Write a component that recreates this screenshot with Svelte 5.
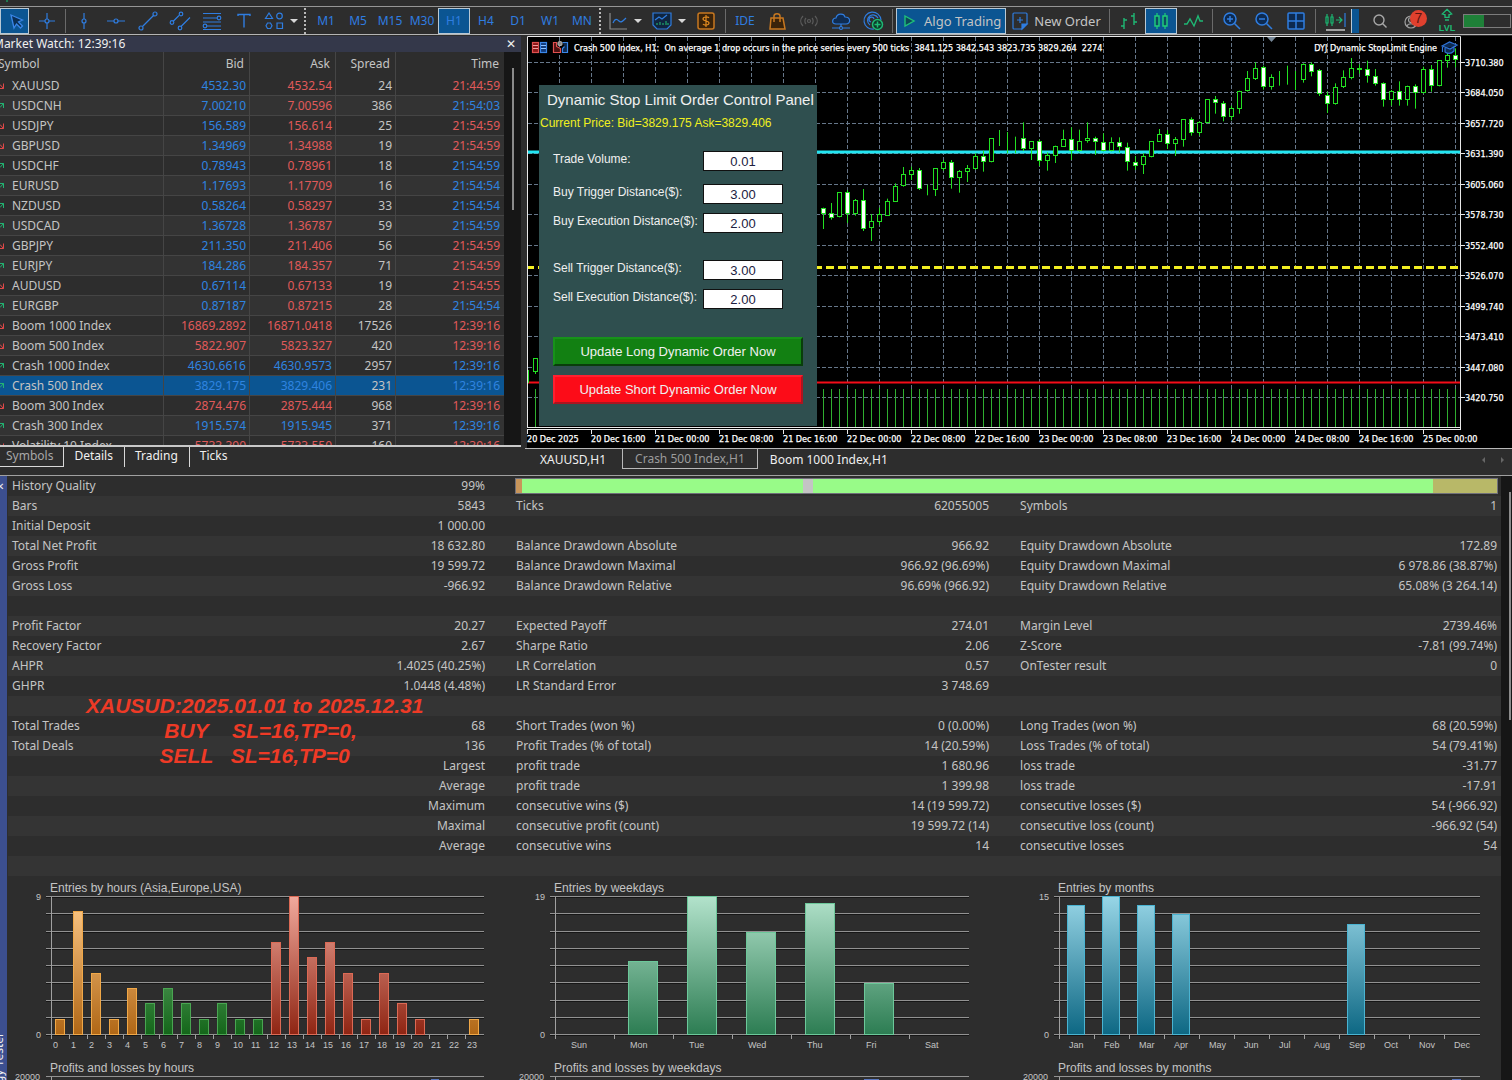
<script>
  const frames = ['M1', 'M5', 'M15', 'M30', 'H1', 'H4', 'D1', 'W1', 'MN'];

  // symbol, bid, ask, spread, time, arrow direction, bid colour, ask colour, time colour
  const quotes = [
    ['XAUUSD', '4532.30', '4532.54', '24', '21:44:59', 'd', 'b', 'r', 'r'],
    ['USDCNH', '7.00210', '7.00596', '386', '21:54:03', 'u', 'b', 'r', 'b'],
    ['USDJPY', '156.589', '156.614', '25', '21:54:59', 'd', 'b', 'r', 'r'],
    ['GBPUSD', '1.34969', '1.34988', '19', '21:54:59', 'd', 'b', 'r', 'r'],
    ['USDCHF', '0.78943', '0.78961', '18', '21:54:59', 'u', 'b', 'r', 'b'],
    ['EURUSD', '1.17693', '1.17709', '16', '21:54:54', 'u', 'b', 'r', 'b'],
    ['NZDUSD', '0.58264', '0.58297', '33', '21:54:54', 'u', 'b', 'r', 'b'],
    ['USDCAD', '1.36728', '1.36787', '59', '21:54:59', 'u', 'b', 'r', 'b'],
    ['GBPJPY', '211.350', '211.406', '56', '21:54:59', 'd', 'b', 'r', 'r'],
    ['EURJPY', '184.286', '184.357', '71', '21:54:59', 'u', 'b', 'r', 'r'],
    ['AUDUSD', '0.67114', '0.67133', '19', '21:54:55', 'd', 'b', 'r', 'r'],
    ['EURGBP', '0.87187', '0.87215', '28', '21:54:54', 'u', 'b', 'r', 'b'],
    ['Boom 1000 Index', '16869.2892', '16871.0418', '17526', '12:39:16', 'd', 'r', 'r', 'r'],
    ['Boom 500 Index', '5822.907', '5823.327', '420', '12:39:16', 'd', 'r', 'r', 'r'],
    ['Crash 1000 Index', '4630.6616', '4630.9573', '2957', '12:39:16', 'u', 'b', 'b', 'b'],
    ['Crash 500 Index', '3829.175', '3829.406', '231', '12:39:16', 'u', 'b', 'b', 'b'],
    ['Boom 300 Index', '2874.476', '2875.444', '968', '12:39:16', 'd', 'r', 'r', 'r'],
    ['Crash 300 Index', '1915.574', '1915.945', '371', '12:39:16', 'u', 'b', 'b', 'b'],
    ['Volatility 10 Index', '5733.390', '5733.550', '160', '12:39:16', 'd', 'r', 'r', 'r']
  ];

  // high, body top, body bottom, low (thirds of a pixel from the chart's top), 1 = bearish
  const candles = [
    [503,505,521,567,1],[489,520,533,539,1],[457,457,532,532,0],[450,457,521,549,1],[477,480,521,527,0],
    [447,480,566,573,1],[522,543,565,603,0],[503,521,545,555,0],[476,484,527,527,0],[430,438,485,485,0],
    [381,403,438,440,0],[380,391,404,420,0],[384,391,448,450,1],[434,447,449,466,0],[385,385,450,468,0],
    [360,366,387,392,0],[360,367,415,446,1],[390,394,415,458,0],[375,385,395,426,0],[340,349,387,389,0],
    [332,349,367,395,1],[294,294,367,367,0],[270,292,295,318,0],[276,292,295,340,0],[290,293,296,340,0],
    [247,295,327,333,1],[303,303,327,360,0],[298,303,362,378,1],[337,346,362,392,0],[317,317,347,369,0],
    [269,298,320,320,0],[262,298,332,360,1],[269,303,332,335,0],[247,294,304,308,0],[290,294,307,345,1],
    [280,307,332,334,1],[292,307,332,334,0],[292,307,322,337,1],[308,320,367,392,1],[348,366,377,390,1],
    [340,349,376,402,0],[303,303,350,352,0],[267,283,305,306,0],[270,283,311,327,1],[291,298,311,348,0],
    [237,237,299,320,0],[232,238,279,287,1],[244,246,279,287,0],[178,178,248,250,0],[168,178,190,221,1],
    [183,188,230,244,1],[197,203,230,241,0],[152,152,206,221,0],[93,115,153,155,0],[67,84,116,120,0],
    [77,82,142,149,1],[103,112,142,149,0],[93,112,115,137,0],[77,114,117,134,0],[93,118,119,150,0],
    [70,73,119,128,0],[67,73,95,109,1],[87,91,163,168,1],[155,164,193,219,1],[130,140,193,194,0],
    [91,112,142,144,0],[54,83,115,118,0],[73,83,90,101,1],[62,88,107,128,1],[87,107,131,137,1],
    [127,129,181,200,1],[150,154,181,197,0],[124,154,179,197,1],[137,137,179,197,0],[133,137,158,206,1],
    [80,87,158,160,0],[75,86,139,155,1],[60,60,139,139,0],[33,46,62,83,0],[25,46,60,82,1]
  ].map(([h, t, b, l, f], i) => ({
    x: 823 + 8 * i, h: 40 + h / 3, t: Math.round(40 + t / 3), b: Math.round(40 + b / 3), l: 40 + l / 3, f
  }));

  const prices = ['3710.380', '3684.050', '3657.720', '3631.390', '3605.060', '3578.730', '3552.400', '3526.070', '3499.740', '3473.410', '3447.080', '3420.750'];
  const priceY = (i) => Math.round(62 + 30.45 * i) + 0.5;
  const times = ['20 Dec 2025', '20 Dec 16:00', '21 Dec 00:00', '21 Dec 08:00', '21 Dec 16:00', '22 Dec 00:00', '22 Dec 08:00', '22 Dec 16:00', '23 Dec 00:00', '23 Dec 08:00', '23 Dec 16:00', '24 Dec 00:00', '24 Dec 08:00', '24 Dec 16:00', '25 Dec 00:00'];
  const columns = Array.from({ length: 29 }, (_, i) => 559.5 + 32 * i);

  const fields = [
    ['vol', 'Trade Volume:', '0.01', 'f1'],
    ['bt', 'Buy Trigger Distance($):', '3.00', 'f2'],
    ['be', 'Buy Execution Distance($):', '2.00', 'f3'],
    ['st', 'Sell Trigger Distance($):', '3.00', 'f4'],
    ['se', 'Sell Execution Distance($):', '2.00', 'f3']
  ];

  const stats = [
    ['Bars', '5843', 'Ticks', '62055005', 'Symbols', '1'],
    ['Initial Deposit', '1 000.00', '', '', '', ''],
    ['Total Net Profit', '18 632.80', 'Balance Drawdown Absolute', '966.92', 'Equity Drawdown Absolute', '172.89'],
    ['Gross Profit', '19 599.72', 'Balance Drawdown Maximal', '966.92 (96.69%)', 'Equity Drawdown Maximal', '6 978.86 (38.87%)'],
    ['Gross Loss', '-966.92', 'Balance Drawdown Relative', '96.69% (966.92)', 'Equity Drawdown Relative', '65.08% (3 264.14)'],
    ['', '', '', '', '', ''],
    ['Profit Factor', '20.27', 'Expected Payoff', '274.01', 'Margin Level', '2739.46%'],
    ['Recovery Factor', '2.67', 'Sharpe Ratio', '2.06', 'Z-Score', '-7.81 (99.74%)'],
    ['AHPR', '1.4025 (40.25%)', 'LR Correlation', '0.57', 'OnTester result', '0'],
    ['GHPR', '1.0448 (4.48%)', 'LR Standard Error', '3 748.69', '', ''],
    ['', '', '', '', '', ''],
    ['Total Trades', '68', 'Short Trades (won %)', '0 (0.00%)', 'Long Trades (won %)', '68 (20.59%)'],
    ['Total Deals', '136', 'Profit Trades (% of total)', '14 (20.59%)', 'Loss Trades (% of total)', '54 (79.41%)'],
    ['', 'Largest', 'profit trade', '1 680.96', 'loss trade', '-31.77'],
    ['', 'Average', 'profit trade', '1 399.98', 'loss trade', '-17.91'],
    ['', 'Maximum', 'consecutive wins ($)', '14 (19 599.72)', 'consecutive losses ($)', '54 (-966.92)'],
    ['', 'Maximal', 'consecutive profit (count)', '19 599.72 (14)', 'consecutive loss (count)', '-966.92 (54)'],
    ['', 'Average', 'consecutive wins', '14', 'consecutive losses', '54'],
    ['', '', '', '', '', '']
  ];

  const hourTone = (i) => (i < 5 || i > 20 ? 'orange' : i < 12 ? 'green' : 'red');
  const charts = [
    {
      title: 'Entries by hours (Asia,Europe,USA)', next: 'Profits and losses by hours', max: 9, end: 484, vw: 504,
      step: 18, bx: 55, bw: 10, lx: 53, hint: [431, 8],
      labels: Array.from({ length: 24 }, (_, i) => String(i)),
      values: [1, 8, 4, 1, 3, 2, 3, 2, 1, 2, 1, 1, 6, 9, 5, 6, 4, 1, 4, 2, 1, 0, 0, 1], tone: hourTone
    },
    {
      title: 'Entries by weekdays', next: 'Profits and losses by weekdays', max: 19, end: 465, vw: 504,
      step: 59, bx: 65, bw: 30, lx: 67, hint: [360, 15],
      labels: ['Sun', 'Mon', 'Tue', 'Wed', 'Thu', 'Fri', 'Sat'],
      values: [0, 10, 19, 14, 18, 7, 0], tone: () => 'mint'
    },
    {
      title: 'Entries by months', next: 'Profits and losses by months', max: 15, end: 472, vw: 485,
      step: 35, bx: 59, bw: 18, lx: 61, hint: [444, 9],
      labels: ['Jan', 'Feb', 'Mar', 'Apr', 'May', 'Jun', 'Jul', 'Aug', 'Sep', 'Oct', 'Nov', 'Dec'],
      values: [14, 15, 14, 13, 0, 0, 0, 0, 12, 0, 0, 0], tone: () => 'aqua'
    }
  ];
  const edge = { orange: '#f0a848', green: '#4aa552', red: '#dc6a55', mint: '#6cc89a', aqua: '#4ab4d2' };
  const ramps = [
    ['orange', '#ffcb8a', '#b06716'], ['green', '#86c48c', '#14661a'], ['red', '#f0a99c', '#8f2513'],
    ['mint', '#b2e2cb', '#2d7d53'], ['aqua', '#97d5e6', '#0e6884']
  ];
</script>

{#snippet icon(name)}
  <svg class="ico" viewBox="0 0 24 24" width="24" height="24" aria-hidden="true">
    {#if name === 'cursor'}
      <path d="M8 6l3 13 2.500-4 4 4 2-2-4-4 4-2z" fill="#0a2f55" stroke="#3a86e8" stroke-width="1.300" />
    {:else if name === 'cross'}
      <path d="M12 4v6M12 14v6M4 12h6M14 12h6" /><circle cx="12" cy="12" r="2" />
    {:else if name === 'vline'}
      <path d="M12 4v6M12 14v6" /><circle cx="12" cy="12" r="2" />
    {:else if name === 'hline'}
      <path d="M3 12h7M14 12h7" /><circle cx="12" cy="12" r="2" />
    {:else if name === 'trend'}
      <path d="M6.500 17.500L17.500 6.500" /><circle cx="5" cy="19" r="2" /><circle cx="19" cy="5" r="2" />
    {:else if name === 'channel'}
      <path d="M5 12.500l6-6M13 17.500l9-9" /><circle cx="4" cy="13.500" r="1.800" /><circle cx="13" cy="5" r="1.800" /><circle cx="12" cy="19" r="1.800" />
    {:else if name === 'fibo'}
      <path d="M3 4.500h18M3 9h14M3 13h18M7 17h14M3 20.500h18" /><circle cx="19" cy="9" r="1.800" /><circle cx="5" cy="17" r="1.800" />
    {:else if name === 'text'}
      <path d="M6 7V5.500h12V7M12 5.500v13" stroke-width="1.400" />
    {:else if name === 'shapes'}
      <path d="M7 4l3.500 5.500h-7z M15 14h5.500v5.500H15z" /><circle cx="17.500" cy="7" r="2.800" /><path d="M5.500 14h3l1.500 2.700-1.500 2.800h-3L4 16.700z" />
    {:else if name === 'chart'}
      <path d="M4 4v16h17" stroke="#8c8c8c" /><path d="M7 14c2-5 4-4 6-2s4 0 7-3" />
    {:else if name === 'indicator'}
      <path d="M3 4h18v12l-4 4H7l-4-4z" fill="#10253f" /><path d="M5 11l4-3 3 2 5-4" /><path d="M7 16v-2M10 16v-3M13 16v-2M16 16v-4M18 16v-2" stroke="#1fa86c" />
    {:else if name === 'dollar'}
      <rect x="4" y="4" width="16" height="16" rx="2" fill="#3a230a" stroke="#c87820" stroke-width="1.500" /><path d="M15 9c-1-1.500-6-1.500-6 1s6 1.500 6 4-5 2.500-6 1M12 6v12" stroke="#e08a20" />
    {:else if name === 'bag'}
      <path d="M6 9h12l2 11H5z" fill="#3a230a" stroke="#c87820" stroke-width="1.500" /><path d="M9 13V7c0-3 6-3 6 0v6" stroke="#c87820" stroke-width="1.500" />
    {:else if name === 'signal'}
      <circle cx="12" cy="12" r="1.500" stroke="#5c5c5c" /><path d="M9 9c-1.500 1.500-1.500 4.500 0 6M15 9c1.500 1.500 1.500 4.500 0 6M6 7c-3 3-3 7 0 10M18 7c3 3 3 7 0 10" stroke="#5c5c5c" />
    {:else if name === 'cloud'}
      <path d="M7 15c-5 0-4-6 0-6 1-5 8-5 9-1 6 0 6 7 1 7z" fill="#0f2c52" /><path d="M12 15v3M3 19h7M14 19h7" /><circle cx="12" cy="19" r="1.500" />
    {:else if name === 'target'}
      <path d="M13 20A8.500 8.500 0 1 1 20 11M9 16a5.500 5.500 0 1 1 8-7M10 13a2.500 2.500 0 1 1 3-3" /><circle cx="16.500" cy="15.500" r="5" fill="#0d3a28" stroke="#1fb874" stroke-width="1.500" /><path d="M13.500 15.500h6M16.500 12.500v6" stroke="#1fb874" stroke-width="1.500" />
    {:else if name === 'play'}
      <path d="M7 7l9 5-9 5z" fill="#0c4a58" stroke="#1fc07a" stroke-width="1.400" />
    {:else if name === 'order'}
      <path d="M6 4h12a1 1 0 0 1 1 1v10l-5 5H6a1 1 0 0 1-1-1V5a1 1 0 0 1 1-1z" /><path d="M9 11h6M12 8v6" /><path d="M19 15l-5 5v-5z" fill="#2f7de0" />
    {:else if name === 'bars'}
      <path d="M7 9v11M4 17h3M7 11h3M17 4v12M14 7h3M17 13h3" stroke="#1fb874" stroke-width="1.400" />
    {:else if name === 'candle'}
      <path d="M8 4v16M16 4v16" stroke="#1fd07a" /><path d="M6 7h4v10H6zM14 7h4v10h-4z" fill="#0b4d60" stroke="#1fd07a" stroke-width="1.400" />
    {:else if name === 'wave'}
      <path d="M3 15h3l3-5 4 7 4-10 2 5h3" stroke="#1fb874" stroke-width="1.400" />
    {:else if name === 'zoomin' || name === 'zoomout'}
      <circle cx="10" cy="10" r="6" fill="#0d2a50" stroke-width="1.500" /><path d="M14.500 14.500L20 20M7 10h6" stroke-width="1.500" />
      {#if name === 'zoomin'}<path d="M10 7v6" stroke-width="1.500" />{/if}
    {:else if name === 'tiles'}
      <rect x="4" y="4" width="16" height="16" rx="1" fill="#0d2a50" stroke-width="1.500" /><path d="M12 4v16M4 12h16" stroke-width="1.500" />
    {:else if name === 'shift'}
      <path d="M4 5v12M9 5v12M13 11h6M16 8l3 3-3 3" stroke="#1fb874" /><path d="M3 8h2v6H3zM8 8h2v6H8z" fill="#0d3a28" stroke="#1fb874" /><path d="M22 4v14" /><path d="M3 21h19" stroke="#a0a0a0" stroke-width="2" />
    {:else if name === 'search'}
      <circle cx="11" cy="11" r="5" stroke="#a8a8a8" stroke-width="1.400" /><path d="M14.500 14.500L18.500 18.500" stroke="#a8a8a8" stroke-width="1.400" />
    {:else if name === 'account'}
      <circle cx="9" cy="13" r="6" stroke="#a0a0a0" /><circle cx="9" cy="11" r="2.500" stroke="#a0a0a0" /><path d="M5 17c1-3 7-3 8 0" stroke="#a0a0a0" />
    {:else if name === 'lvl'}
      <path d="M12 2l7 7-3 1h-1v4H9v-4H8L5 9zM9 18h6" stroke="#1fb874" stroke-width="2" />
    {/if}
  </svg>
{/snippet}

{#snippet tool(name)}
  <button class="tool" aria-label={name}>{@render icon(name)}</button>
{/snippet}

<div class="app">
  <div class="strip"></div>
  <header class="toolbar">
    <button class="tool on first" aria-label="cursor">{@render icon('cursor')}</button>
    <button class="tool wide" aria-label="crosshair">{@render icon('cross')}</button>
    <i class="sep narrow"></i>
    {#each ['vline', 'hline', 'trend', 'channel', 'fibo', 'text'] as n}{@render tool(n)}{/each}
    <button class="tool drop" aria-label="shapes">{@render icon('shapes')}<i class="caret"></i></button>
    <i class="dots"></i>
    {#each frames as f}<button class="tool" class:on={f === 'H1'}>{f}</button>{/each}
    <i class="dots tight"></i>
    <button class="tool drop late" aria-label="chart type">{@render icon('chart')}<i class="caret"></i></button>
    <button class="tool drop late" aria-label="indicators">{@render icon('indicator')}<i class="caret"></i></button>
    {@render tool('dollar')}
    <i class="sep"></i>
    <button class="tool">IDE</button>
    {#each ['bag', 'signal', 'cloud', 'target'] as n}{@render tool(n)}{/each}
    <i class="sep"></i>
    <button class="tool on label">{@render icon('play')}<span>Algo Trading</span></button>
    <button class="tool label">{@render icon('order')}<span>New Order</span></button>
    <i class="sep"></i>
    {@render tool('bars')}
    <button class="tool on" aria-label="candles">{@render icon('candle')}</button>
    {@render tool('wave')}
    <i class="sep"></i>
    {#each ['zoomin', 'zoomout', 'tiles'] as n}{@render tool(n)}{/each}
    <i class="sep"></i>
    {@render tool('shift')}
    <i class="sliver"></i>
    <span class="grow"></span>
    {@render tool('search')}
    <button class="tool wide" aria-label="account">{@render icon('account')}<b class="badge">7</b></button>
    <button class="tool lvl">{@render icon('lvl')}<span>LVL</span></button>
    <div class="meter"><i></i></div>
  </header>

  <main class="upper">
    <section class="watch">
      <div class="wtitle"><span>Market Watch: 12:39:16</span><button aria-label="close">✕</button></div>
      <div class="wbody">
        <table class="quotes">
          <colgroup><col /><col class="cp" /><col class="cp" /><col class="cs" /><col class="ct" /></colgroup>
          <thead><tr><th><span class="cut">Symbol</span></th><th>Bid</th><th>Ask</th><th>Spread</th><th>Time</th></tr></thead>
          <tbody>
            {#each quotes as [s, bid, ask, sp, t, dir, cb, ca, ct]}
              <tr class:sel={s === 'Crash 500 Index'}>
                <td>
                  <svg class="arrow" width="6" height="8" viewBox="0 0 6 8" aria-hidden="true">
                    {#if dir === 'u'}<path d="M0 1.500h3.500V6M3.500 1.500L0 5.500" stroke="#22b573" />{:else}<path d="M3.500 1.500v5H0M3.500 6.500L0 2.500" stroke="#e04848" />{/if}
                  </svg>{s}
                </td>
                <td class={cb}>{bid}</td><td class={ca}>{ask}</td><td>{sp}</td><td class={ct}>{t}</td>
              </tr>
            {/each}
          </tbody>
        </table>
        <div class="track"><i></i></div>
      </div>
      <nav class="wtabs"><button class="cur">Symbols</button><button>Details</button><button>Trading</button><button>Ticks</button></nav>
    </section>

    <section class="chart">
      <svg class="plot" viewBox="525 36 987 412" role="img" aria-label="Crash 500 Index price chart">
        <rect x="527" y="36" width="985" height="412" fill="#000" />
        <g stroke="#66778a" stroke-width="1">
          {#each prices as _, i}<path d="M528 {priceY(i)}H1460" stroke-dasharray="4 2" />{/each}
          {#each columns as x}<path d="M{x} 37V427" stroke-dasharray="4 2" />{/each}
        </g>
        <g stroke="#2fae2f">
          <path d="M535.500 389V427" />
          {#each candles as c}<path d="M{c.x + 0.5} 389V427" />{/each}
        </g>
        <path d="M528 152H1460" stroke="#22e6f2" stroke-width="3" />
        <path d="M528 267.500H1460" stroke="#f2ee22" stroke-width="3" stroke-dasharray="8 4" stroke-dashoffset="2" />
        <path d="M528 382.500H1460" stroke="#f40c18" stroke-width="2" />
        <g stroke="#22e022" fill="#000">
          <path d="M535.500 371v3" /><rect x="533.500" y="358.500" width="4" height="13" /><path d="M528.500 370v13" />
          {#each candles as c}
            <path d="M{c.x + 0.5} {c.h}V{c.l}" />
            <rect x={c.x - 1.5} y={c.t + 0.5} width="4" height={Math.max(c.b - c.t - 1, 0)} fill={c.f ? '#fff' : '#000'} />
          {/each}
        </g>
        <path d="M1267 37h9l-4.500 5z" fill="#778899" />
        <path d="M527.500 427V36.500H1460.500V429.500M527 427.500H1461M527 429.500H1461" fill="none" stroke="#e8e8e8" />
        <g class="axis">
          {#each prices as p, i}<path d="M1461 {priceY(i)}h4" stroke="#e8e8e8" /><text x="1465" y={priceY(i) + 3.5}>{p}</text>{/each}
          {#each times as t, i}<path d="M{527.5 + 64 * i} 430v4" stroke="#e8e8e8" /><text x={527 + 64 * i} y="442">{t}</text>{/each}
        </g>
        <g class="head">
          <text x="574" y="51">Crash 500 Index, H1:&nbsp; On average 1 drop occurs in the price series every 500 ticks&nbsp; 3841.125 3842.543 3823.735 3829.264&nbsp; 2274</text>
          <text x="1437" y="51" text-anchor="end">DYJ Dynamic StopLimit Engine</text>
        </g>
        <g fill="none" stroke-width="1.200">
          <rect x="532.500" y="42.500" width="6" height="10" fill="#8a1818" stroke="#e05050" /><rect x="540.500" y="42.500" width="6" height="10" fill="#123a78" stroke="#3a86e8" />
          <path d="M533 45.500h5M533 48.500h5" stroke="#f0a0a0" /><path d="M541 45.500h5M541 48.500h5" stroke="#8ac0ff" />
          <path d="M553.500 42.500h3v4l4 2v4h-7z" fill="#4a1010" stroke="#e05050" /><path d="M562.500 42.500h5v10h-5v-4l2-2" fill="#0d2a50" stroke="#3a86e8" /><circle cx="560" cy="43.500" r="2" fill="#888" stroke="#aaa" />
          <path d="M1442 46l7.500-4 7.500 3-7 4zM1445 48v4c3 2 6 2 9-1v-4M1442.500 46v6" fill="#0d2a50" stroke="#2f74d8" />
        </g>
      </svg>
      <form class="panel">
        <h2>Dynamic Stop Limit Order Control Panel</h2>
        <p>Current Price: Bid=3829.175 Ask=3829.406</p>
        {#each fields as [id, label, value, cls]}
          <div class="field {cls}"><label for={id}>{label}</label><input {id} {value} /></div>
        {/each}
        <button type="button" class="long">Update Long Dynamic Order Now</button>
        <button type="button" class="short">Update Short Dynamic Order Now</button>
      </form>
      <nav class="ctabs"><button>XAUUSD,H1</button><button class="cur">Crash 500 Index,H1</button><button>Boom 1000 Index,H1</button><span class="grow"></span><i class="al"></i><i class="ar"></i></nav>
    </section>
  </main>

  <section class="tester">
    <aside><button aria-label="close tester">✕</button><span>Strategy Tester</span></aside>
    <div class="report">
      <table class="stats">
        <colgroup><col class="g" /><col class="g" /><col class="g" /><col class="g" /><col /><col /></colgroup>
        <tbody>
          <tr>
            <td>History Quality</td><td>99%</td>
            <td colspan="4" class="qcell"><div class="quality"><i class="q1"></i><i class="q2"></i><i class="q3"></i><i class="q4"></i><i class="q5"></i></div></td>
          </tr>
          {#each stats as row}
            <tr>{#each row as cell}<td>{cell}</td>{/each}</tr>
          {/each}
        </tbody>
      </table>
      <div class="graphs">
        {#each charts as c}
          <svg viewBox="8 876 {c.vw} 204" role="img" aria-label={c.title}>
            <defs>
              {#each ramps as [n, a, z]}
                <linearGradient id="ramp-{n}" gradientUnits="userSpaceOnUse" x1="0" y1="897" x2="0" y2="1034"><stop offset="0" stop-color={a} /><stop offset="1" stop-color={z} /></linearGradient>
              {/each}
            </defs>
            {#each Array(9) as _, i}
              <path d="M46 {Math.round(896 + 17.25 * i) + 1.5}H{c.end}" stroke="#161616" />
              <path d="M46 {Math.round(896 + 17.25 * i) + 0.5}H{c.end}" stroke="#929292" />
            {/each}
            <path d="M51.500 897V1039M51.500 1077v3" stroke="#a0a0a0" />
            <path d="M46 1076.500H{c.end}" stroke="#929292" />
            {#each c.labels as l, i}
              {#if i}<path d="M{51.5 + c.step * i} 1035v4" stroke="#a0a0a0" />{/if}
              <text class="tick" x={c.lx + c.step * i} y="1048">{l}</text>
              {#if c.values[i]}
                <rect x={c.bx + c.step * i + 0.5} y={Math.round(1034 - (138 * c.values[i]) / c.max) + 0.5} width={c.bw - 1} height={Math.round((138 * c.values[i]) / c.max)} fill="url(#ramp-{c.tone(i)})" stroke={edge[c.tone(i)]} />
              {/if}
            {/each}
            <path d="M{c.hint[0]} 1079.500h{c.hint[1]}" stroke="#5a78c0" />
            <text class="cap" x="50" y="892">{c.title}</text>
            <text class="cap" x="50" y="1072">{c.next}</text>
            <text class="tick" x="41" y="900" text-anchor="end">{c.max}</text>
            <text class="tick" x="41" y="1038" text-anchor="end">0</text>
            <text class="tick" x="40" y="1080" text-anchor="end">20000</text>
          </svg>
        {/each}
      </div>
      <div class="note"><div>XAUSUD:2025.01.01 to 2025.12.31</div><div>&nbsp; BUY&nbsp;&nbsp;&nbsp; SL=16,TP=0,</div><div>SELL&nbsp;&nbsp; SL=16,TP=0</div></div>
    </div>
    <div class="track low"><i></i></div>
  </section>
</div>

<style>
  :global(body) { margin: 0; background: #2d2d2d; }
  .app { height: 100vh; overflow: hidden; display: flex; flex-direction: column; font: 12px/20px 'Noto Sans', 'Open Sans', sans-serif; color: #c4c4c4; background: #2d2d2d; }
  button { font: inherit; color: inherit; background: none; border: 0; padding: 0; margin: 0; }
  .grow { flex: 1; }

  .strip { height: 6px; flex: none; border-bottom: 1px solid #969696; background: linear-gradient(90deg, transparent 6px, #1f7a50 6px, #1f7a50 8px, transparent 8px) 0 0 / 100% 2px no-repeat; }
  .toolbar { display: flex; align-items: center; height: 27px; flex: none; border-bottom: 1px solid #b4b4b4; margin-bottom: 1px; color: #2f7de0; }
  .tool { width: 32px; height: 26px; flex: none; display: flex; align-items: center; justify-content: center; position: relative; }
  .tool.on { background: #0b5592; outline: 1px solid #b8c8d4; outline-offset: -1px; box-sizing: border-box; }
  .tool.first { width: 29px; }
  .tool.wide { width: 35px; }
  .tool.drop { width: 44px; justify-content: flex-start; gap: 4px; padding-left: 2px; box-sizing: border-box; }
  .tool.late { padding-left: 4px; }
  .tool.label { width: auto; padding: 0 5px 0 2px; gap: 2px; color: #c4c4c4; box-sizing: border-box; font-size: 13px; }
  .ico { fill: none; stroke: #2f7de0; stroke-width: 1.2; flex: none; }
  .caret { border: 4px solid transparent; border-top-color: #d8d8d8; border-bottom: 0; }
  .sep { width: 1px; height: 24px; margin: 0 3px; background: #6a6a6a; flex: none; }
  .sep.narrow { margin: 0 2px 0 1px; }
  .dots { height: 26px; flex: none; border-left: 2px dotted #b8b8b8; margin: 0 4px 0 0; }
  .dots.tight { margin: 0 1px; }
  .sliver { width: 7px; height: 24px; background: #0b5592; border-left: 1px solid #b8c8d4; }
  .badge { position: absolute; left: 14px; top: 2px; width: 17px; height: 17px; border-radius: 9px; background: #e0402e; color: #5a1410; font: 14px/17px 'Liberation Sans', sans-serif; text-align: center; }
  .lvl { flex-direction: column; font: bold 9px/9px 'Liberation Sans', sans-serif; color: #1fb874; }
  .lvl .ico { width: 16px; height: 16px; }
  .meter { width: 48px; height: 14px; border: 1px solid #7c7c7c; box-sizing: border-box; margin: 0 1px 0 0; }
  .meter i { display: block; width: 44%; height: 100%; background: #1e8038; }

  .upper { display: flex; flex: none; height: auto; }
  .watch { width: 521px; flex: none; display: flex; flex-direction: column; height: 438px; }
  .wtitle { display: flex; justify-content: space-between; height: 16px; flex: none; background: #34384a; color: #f0f0f0; line-height: 16px; padding-right: 5px; }
  .wtitle span { margin-left: -7px; }
  .wbody { display: flex; height: 395px; flex: none; overflow: hidden; border-bottom: 2px solid #c8c8c8; box-sizing: border-box; }
  .quotes { flex: 1; border-collapse: separate; border-spacing: 0; table-layout: fixed; }
  .cp { width: 86px; } .cs { width: 60px; } .ct { width: 108px; }
  .quotes tr { height: 20px; }
  .quotes thead tr { height: 24px; }
  .quotes th { font-weight: 400; text-align: right; padding: 0 5px; border-right: 1px solid #454545; line-height: 18px; vertical-align: middle; }
  .quotes th:first-child { text-align: left; padding: 0; }
  .cut { margin-left: -2px; }
  .quotes td { padding: 0 3px; text-align: right; border: 0 solid #454545; border-width: 0 1px 1px 0; line-height: 19px; white-space: nowrap; }
  .quotes td:first-child { text-align: left; padding: 0; }
  .quotes td:last-child { border-right: 0; padding-right: 4px; }
  .quotes th:last-child { border-right: 0; }
  .quotes tbody tr:nth-child(even) { background: #333; }
  .quotes tbody tr.sel { background: #0b5592; }
  .arrow { fill: none; margin-right: 6px; }
  .quotes .b { color: #2f84e0; }
  .quotes .r { color: #e05a5a; }
  .track { width: 17px; background: #161616; flex: none; padding-top: 16px; box-sizing: border-box; }
  .track i { display: block; width: 2px; height: 142px; margin-left: 8px; background: #8a8a8a; }
  .wtabs { display: flex; align-items: flex-start; color: #f0f0f0; line-height: 18px; }
  .wtabs button { padding: 0 11px 2px 10px; height: 20px; border-right: 1px solid #d8d8d8; }
  .wtabs button:last-child { border: 0; }
  .wtabs .cur { color: #a8a8a8; padding-left: 6px; padding-right: 10px; border-bottom: 1px solid #d8d8d8; }

  .chart { flex: 1; margin-left: 4px; position: relative; display: flex; flex-direction: column; min-width: 0; }
  .plot { display: block; width: 100%; height: auto; }
  .plot text { fill: #fff; font-family: 'DejaVu Sans Condensed', 'DejaVu Sans', sans-serif; font-size: 9px; stroke: #fff; stroke-width: 0.25px; }
  .ctabs { display: flex; height: 25px; border-top: 1px solid #b8b8b8; line-height: 18px; color: #f0f0f0; align-items: flex-start; }
  .ctabs button { padding: 2px 16px 0 15px; }
  .ctabs button:nth-child(3) { padding-left: 12px; }
  .ctabs .cur { color: #9c9c9c; border: 1px solid #b8b8b8; border-top: 0; padding: 1px 12px 0; height: 20px; box-sizing: border-box; }
  .al, .ar { border: 3px solid transparent; margin: 8px 16px 0 0; }
  .al { border-right-color: #666; }
  .ar { border-left-color: #666; margin-right: 5px; }

  .panel { position: absolute; left: 14px; top: 49px; width: 278px; height: 341px; box-sizing: border-box; padding: 0 14px; background: #2f4f4f; color: #f0f0f0; font: 13px/16px 'Liberation Sans', sans-serif; }
  .panel h2 { margin: 0 -14px; padding: 7px 0 0 8px; font-size: 15px; font-weight: 400; line-height: 16px; white-space: nowrap; }
  .panel p { margin: 7px -13px 20px; font-size: 12px; line-height: 16px; color: #f0f020; }
  .field { display: flex; align-items: flex-start; justify-content: space-between; padding-right: 20px; height: 20px; white-space: nowrap; }
  .field label { font-size: 12px; }
  .field input { width: 80px; height: 20px; box-sizing: border-box; border: 1px solid #101010; background: #fff; color: #202040; text-align: center; font: inherit; padding: 0; flex: none; }
  .f2 { margin-top: 13px; } .f3 { margin-top: 9px; } .f4 { margin-top: 27px; }
  .long, .short { display: block; width: 100%; height: 29px; border: 2px outset #17921a; background: #128012; color: #f0f0f0; }
  .long { margin-top: 28px; }
  .short { margin-top: 9px; background: #fc0c18; border-color: #ff2030; }

  .tester { flex: 1; display: flex; min-height: 0; margin-top: 1px; border-top: 1px solid #a0a0a0; }
  aside { width: 7px; margin-right: 1px; flex: none; background: #3c4f8f; color: #f0f0f0; overflow: hidden; display: flex; flex-direction: column; justify-content: space-between; }
  aside button { width: 8px; margin-left: -4px; font-size: 10px; }
  aside span { writing-mode: vertical-rl; transform: rotate(180deg); line-height: 14px; margin: 0 0 -36px -8px; }
  .report { flex: 1; min-width: 0; position: relative; }
  .stats { width: 100%; table-layout: fixed; border-collapse: collapse; }
  .g { width: 16.88%; }
  .stats tr { height: 20px; }
  .stats tr:nth-child(even) { background: #343434; }
  .stats td { padding: 0 0 0 4px; line-height: 19px; vertical-align: top; white-space: nowrap; }
  .stats td:nth-child(even) { text-align: right; padding: 0 27px 0 0; }
  .stats td:nth-child(6) { padding-right: 4px; }
  .stats .qcell { padding: 2px 3px 0 4px; }
  .quality { display: flex; height: 14px; border: 1px solid #70707a; margin-left: -1px; }
  .q1 { width: 6px; background: #c8955a; }
  .q2 { flex: 281; background: #98fb88; }
  .q3 { width: 10px; background: #c4c4c4; }
  .q4 { flex: 621; background: #98fb88; }
  .q5 { flex: 64; background: #b8b868; }
  .graphs { display: grid; grid-template-columns: 504fr 504fr 485fr; }
  .graphs svg { width: 100%; display: block; font-family: 'Liberation Sans', sans-serif; fill: #c4c4c4; }
  .cap { font-size: 12px; }
  .tick { font-size: 9px; }
  .note { position: absolute; left: 78px; top: 217px; color: #ee3a26; font: italic bold 21px/25px 'Liberation Sans', sans-serif; text-align: center; white-space: nowrap; }
  .track.low { width: 11px; }
  .track.low i { margin-left: 8px; height: 228px; }
</style>
